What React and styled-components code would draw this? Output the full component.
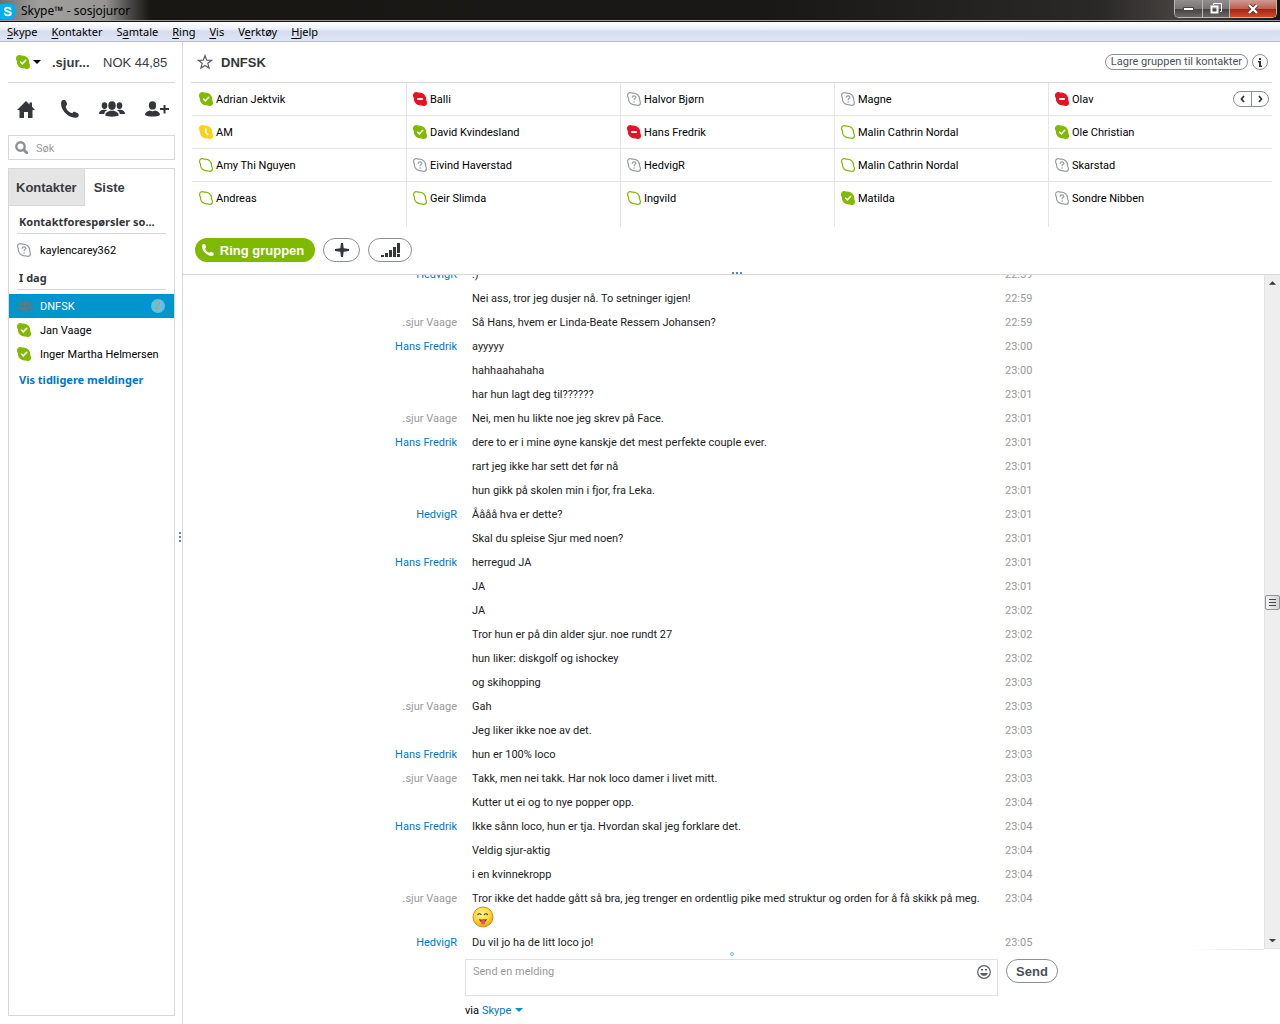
import React from 'react';
import styled, { css, createGlobalStyle } from 'styled-components';

const ui = `Roboto, 'Noto Sans', sans-serif`;
const noto = `'Noto Sans', 'Open Sans', sans-serif`;
const arial = `'Liberation Sans', Arial, sans-serif`;

const GlobalStyle = createGlobalStyle`
    * { box-sizing: border-box; }
    body {
        margin: 0;
        background: #fff;
        color: #000;
        font-family: ${ui};
        font-size: 11px;
    }
    button, input, textarea { font: inherit; color: inherit; margin: 0; }
    button { padding: 0; border: 0; background: none; cursor: pointer; }
    a { text-decoration: none; }
    ul { margin: 0; padding: 0; list-style: none; }
    svg { display: block; flex: none; }
`;

const Window = styled.div`
    display: flex;
    flex-direction: column;
    height: 100vh;
`;

/* title bar */
const TitleBar = styled.header`
    display: flex;
    align-items: flex-start;
    height: 22px;
    flex: none;
    overflow: hidden;
    background: linear-gradient(90deg, #6f6f6f 0, #a0a09f 40px, #969594 105px, #4a4846 130px, #191714 150px, #1a1816 60%, #2b2928 86%, #45423f 92%, #181513 100%);
    border-bottom: 1px solid #111;
    box-shadow: inset 0 -1px 0 #9a9a9a;
`;

const WindowTitle = styled.div`
    display: flex;
    align-items: center;
    gap: 5px;
    height: 21px;
    font-family: ${noto};
    font-size: 12px;
`;

const WindowButtons = styled.div`
    display: flex;
    height: 18px;
    margin: 0 3px 0 auto;
    border: 1px solid #b9b5b3;
    border-top: 0;
    border-radius: 0 0 5px 5px;
    overflow: hidden;
`;

const WindowButton = styled.button`
    display: flex;
    align-items: center;
    justify-content: center;
    width: ${props => props.$close ? '47px' : '27px'};
    background: linear-gradient(#918f8e 0, #777473 50%, #454140 52%, #6a6665 100%);
    ${props => props.$close && css`
        background: linear-gradient(#cf9b91 0, #bd6154 50%, #a4230f 52%, #cc4a2c 100%);
    `}
    & + & { border-left: 1px solid #b9b5b3; }
`;

/* menu bar */
const MenuBar = styled.nav`
    display: flex;
    align-items: center;
    gap: 14px;
    height: 20px;
    flex: none;
    padding-left: 7px;
    background: linear-gradient(#fff 0, #eef1f8 35%, #d5dcee 50%, #dfe5f5 100%);
    border-bottom: 1px solid #b5bccb;
`;

const MenuItem = styled.button`
    font-family: ${noto};
    line-height: 18px;
    u { text-underline-offset: 2px; }
`;

const Body = styled.div`
    display: flex;
    flex: 1;
    min-height: 0;
`;

/* left column */
const Sidebar = styled.aside`
    position: relative;
    display: flex;
    flex-direction: column;
    flex: 0 0 183px;
    min-width: 0;
    padding: 0 7px 8px 8px;
    border-right: 1px solid #d6d7d9;
`;

const Account = styled.div`
    display: flex;
    align-items: center;
    height: 41px;
    padding-left: 8px;
    border-bottom: 1px solid #d6d7d9;
    font-family: ${arial};
    font-size: 13px;
    color: #3a3b3f;
    white-space: nowrap;
`;

const StatusButton = styled.button`
    display: flex;
    align-items: center;
    gap: 3px;
    margin-right: 11px;
`;

const AccountName = styled.strong`
    width: 40px;
    margin-right: 11px;
`;

const Toolbar = styled.div`
    display: flex;
    align-items: center;
    justify-content: space-between;
    height: 52px;
    padding: 0 6px 0 9px;
    color: #35363b;
    button:first-child { width: 24px; }
`;

const Search = styled.label`
    display: flex;
    align-items: center;
    gap: 8px;
    height: 25px;
    padding-left: 6px;
    border: 1px solid #d6d7d9;
    input {
        flex: 1;
        min-width: 0;
        padding: 2px 0 0;
        border: 0;
        outline: 0;
    }
    input::placeholder { color: #999; }
`;

const Panel = styled.section`
    flex: 1;
    min-height: 0;
    margin-top: 8px;
    border: 1px solid #d6d7d9;
`;

const Tabs = styled.div`
    display: flex;
    height: 37px;
    font-family: ${arial};
    font-size: 13px;
    font-weight: bold;
`;

const Tab = styled.button`
    padding: 0 9px;
    color: #3a3b3f;
    ${props => props.$muted && css`
        padding: 0 7px;
        background: #e5e5e5;
        border-right: 1px solid #d6d7d9;
        border-bottom: 1px solid #d6d7d9;
    `}
`;

const ListHeading = styled.h2`
    height: 24px;
    margin: 4px 8px;
    padding-left: 2px;
    border-bottom: 1px solid #d6d7d9;
    font-family: ${noto};
    font-size: 11px;
    line-height: 24px;
    color: #35363b;
    white-space: nowrap;
`;

const Contact = styled.button`
    display: flex;
    align-items: center;
    gap: 8px;
    width: 100%;
    height: 24px;
    padding: 0 9px 0 8px;
    text-align: left;
    white-space: nowrap;
    ${props => props.$active && css`
        background: #0095cc;
        color: #fff;
    `}
`;

const IconSlot = styled.span`
    display: flex;
    width: 15px;
`;

const Unread = styled.span`
    width: 14px;
    height: 14px;
    margin-left: auto;
    border-radius: 7px;
    background: #66bfe0;
    color: #b0a878;
    line-height: 14px;
    text-align: center;
`;

const OlderLink = styled.a`
    display: block;
    padding-left: 10px;
    font-family: ${noto};
    font-weight: bold;
    line-height: 28px;
    color: #0078ca;
`;

const SideGrip = styled.span`
    position: absolute;
    top: 490px;
    right: 1px;
    width: 2px;
    height: 10px;
    background: repeating-linear-gradient(#5f83b3 0 2px, transparent 2px 4px);
`;

/* conversation */
const Main = styled.main`
    display: flex;
    flex-direction: column;
    flex: 1;
    min-width: 0;
`;

const GroupHeader = styled.section`
    position: relative;
    flex: none;
    padding: 0 8px;
    border-bottom: 1px solid #d6d7d9;
`;

const GroupTitle = styled.div`
    display: flex;
    align-items: center;
    height: 41px;
    padding: 0 4px 0 6px;
    border-bottom: 1px solid #d6d7d9;
    h1 {
        flex: 1;
        margin: 0 0 0 8px;
        font-family: ${arial};
        font-size: 13px;
        color: #35363b;
    }
`;

const SaveButton = styled.button`
    height: 16px;
    padding: 0 5px;
    margin-right: 4px;
    border: 1px solid #8b8f96;
    border-radius: 8px;
    line-height: 14px;
    color: #4d5058;
`;

const InfoButton = styled.button`
    display: flex;
    align-items: center;
    justify-content: center;
    width: 16px;
    height: 16px;
    border: 1px solid #8b8f96;
    border-radius: 8px;
`;

const Members = styled.ul`
    display: grid;
    grid-template-columns: 215fr 214fr 214fr 214fr 223fr;
    padding-left: 1px;
`;

const Member = styled.li`
    display: flex;
    align-items: flex-start;
    gap: 3px;
    height: ${props => props.$last ? '45px' : '33px'};
    padding: 9px 12px 0 6px;
    line-height: 16px;
    white-space: nowrap;
    border-right: 1px solid #e3e5ea;
    border-bottom: ${props => props.$last ? '0' : '1px solid #e3e5ea'};
    &:nth-child(5n) { border-right: 0; }
    &:nth-child(5n + 1) { padding-left: 7px; }
`;

const Pager = styled.span`
    display: flex;
    height: 16px;
    margin: -1px -9px 0 auto;
    border: 1px solid #8b8f96;
    border-radius: 8px;
    button {
        display: flex;
        align-items: center;
        justify-content: center;
        width: 17px;
    }
    button + button { border-left: 1px solid #8b8f96; }
`;

const Actions = styled.div`
    display: flex;
    gap: 8px;
    padding: 11px 4px 12px;
`;

const PillButton = styled.button`
    display: flex;
    align-items: center;
    justify-content: center;
    height: 24px;
    width: ${props => props.$width};
    border: 1px solid #8b8f96;
    border-radius: 12px;
    font-family: ${arial};
    font-size: 13px;
    font-weight: bold;
    color: #4d5058;
    ${props => props.$primary && css`
        gap: 6px;
        padding-right: 4px;
        border: 0;
        background: #7fba00;
        color: #fff;
    `}
`;

const HeaderGrip = styled.span`
    position: absolute;
    left: 50%;
    bottom: 0;
    width: 10px;
    height: 2px;
    background: repeating-linear-gradient(90deg, #5f83b3 0 2px, transparent 2px 4px);
`;

const Chat = styled.section`
    display: flex;
    flex: 1;
    min-height: 0;
    overflow: hidden;
`;

const Messages = styled.ul`
    flex: 1;
    min-width: 0;
    /* scrolled a little past the top of the first message */
    margin-top: -12px;
`;

const Message = styled.li`
    display: grid;
    grid-template-columns: 289fr 533fr 259fr;
    min-height: 24px;
    line-height: 24px;
`;

const Author = styled.span`
    padding-right: 15px;
    text-align: right;
    color: ${props => props.$self ? '#999' : '#0078ca'};
`;

const Text = styled.div`
    color: #222;
    svg { margin: -5px 0 3px; }
`;

const Time = styled.time`
    color: #999;
`;

const Scrollbar = styled.div`
    display: flex;
    flex-direction: column;
    align-items: center;
    flex: 0 0 16px;
    padding: 6px 0;
    background: #eee;
    border-left: 1px solid #e2e2e2;
    border-bottom: 1px solid #e2e2e2;
`;

const Thumb = styled.div`
    display: flex;
    align-items: center;
    justify-content: center;
    width: 15px;
    height: 15px;
    margin: 310px 0 auto;
    border: 1px solid #929292;
    border-radius: 2px;
    background: linear-gradient(90deg, #f6f6f6, #d2d2d5);
`;

const Composer = styled.form`
    position: relative;
    display: grid;
    grid-template-columns: 282fr 533fr 282fr;
    flex: none;
    padding: 10px 0 5px;
`;

const InputBox = styled.div`
    grid-column: 2;
    display: flex;
    align-items: flex-start;
    height: 37px;
    padding: 3px 6px 0 7px;
    border: 1px solid #dfe0e2;
    textarea {
        flex: 1;
        height: 28px;
        padding: 0;
        border: 0;
        outline: 0;
        resize: none;
        line-height: 18px;
    }
    textarea::placeholder { color: #999; }
    button { margin-top: 2px; }
`;

const SendSlot = styled.div`
    padding-left: 8px;
`;

const Via = styled.div`
    grid-column: 2;
    display: flex;
    align-items: center;
    gap: 3px;
    height: 18px;
    margin-top: 5px;
    a { display: flex; align-items: center; gap: 4px; color: #0078ca; }
`;

const ComposerGrip = styled.span`
    position: absolute;
    left: 50%;
    top: 3px;
    width: 4px;
    height: 4px;
    margin-left: -2px;
    border: 1px solid #7fb2cc;
    border-radius: 2px;
`;

const EdgeFade = styled.span`
    position: absolute;
    right: 16px;
    top: 0;
    width: 76px;
    height: 1px;
    background: linear-gradient(90deg, #fff, #e2e2e2);
`;

const STATUS_COLORS = { online: '#7fba00', busy: '#e81123', away: '#fcd116', offline: '#7fba00', unknown: '#999da3' };
const BUBBLE = 'M3.300.7C4.100.7 4.700 1 5.200 1.200C9.500.8 13 3.500 12.700 8.200C13.100 8.900 13.400 9.800 13.400 10.700C13.400 12.300 12.300 13.400 10.700 13.400C9.900 13.400 9.300 13.100 8.800 12.800C4.500 13.200 1 10.500 1.400 5.800C.9 5.100.6 4.200.6 3.400C.6 1.800 1.700.7 3.300.7z';

function Status({ type }) {
    const color = STATUS_COLORS[type];
    const hollow = type === 'offline' || type === 'unknown';
    return (
        <svg width="14" height="14" viewBox="0 0 14 14" fill="none" strokeLinecap="round">
            <path d={BUBBLE} fill={hollow ? '#fff' : color} stroke={color} strokeWidth="1.2" />
            {type === 'online' && <path d="M4.700 7.200l1.700 1.700 3.300-3.600" stroke="#fff" strokeWidth="1.600" />}
            {type === 'busy' && <path d="M4.200 7h5.600" stroke="#fff" strokeWidth="2" strokeLinecap="butt" />}
            {type === 'away' && <path d="M6.800 3.800v3.700l2 2" stroke="#fff" strokeWidth="1.700" />}
            {type === 'unknown' && (
                <>
                    <path d="M5.200 5.300c0-2 3.700-2 3.700 0 0 1.200-1.800 1.200-1.800 2.400" stroke={color} strokeWidth="1.200" />
                    <circle cx="7.100" cy="10" r=".8" fill={color} />
                </>
            )}
        </svg>
    );
}

const Caret = ({ color = '#000', size = 8 }) => (
    <svg width={size} height={size / 2} viewBox="0 0 8 4"><path d="M0 0h8L4 4z" fill={color} /></svg>
);

const Phone = ({ size }) => (
    <svg width={size} height={size} viewBox="0 0 18 18" fill="currentColor">
        <path d="M1.100.5c1.500-.8 3.300-.6 4 .7l.9 2.600c.3 1-.2 1.700-1.300 2.500.4 3.300 3.100 6.100 6.600 6.900.9-1.200 1.800-1.600 2.800-1.200l2.700 1.200c1.200.7 1.300 2.400.3 3.600-1.400 1.400-4 1.200-6.500.3C5.900 15.300 1.900 11.400.5 6.700-.1 4.300-.1 1.500 1.100.5z" />
    </svg>
);

const People = ({ width = 26, color = 'currentColor' }) => (
    <svg width={width} height={width * 16 / 26} viewBox="0 0 26 16" fill={color}>
        <ellipse cx="5.500" cy="4.600" rx="2.800" ry="3.400" />
        <ellipse cx="20.500" cy="4.600" rx="2.800" ry="3.400" />
        <path d="M0 13c0-2.500 1.500-3.500 4-4.200h3.200l.8.500c-1.800 1-2.700 2-2.700 3.700H0zM26 13c0-2.500-1.500-3.500-4-4.200h-3.200l-.8.500c1.800 1 2.700 2 2.700 3.700H26z" />
        <ellipse cx="13" cy="4.600" rx="3.700" ry="4.300" />
        <path d="M6.300 14.500c0-3 2.200-3.500 4.700-4.700h4c2.500 1.200 4.700 1.700 4.700 4.700-3 1.500-10.400 1.500-13.400 0z" />
    </svg>
);

const Tongue = () => (
    <svg width="22" height="22" viewBox="0 0 22 22" fill="none">
        <defs>
            <radialGradient id="face" cx=".45" cy=".35" r=".65">
                <stop offset="0" stopColor="#fff5a0" />
                <stop offset=".65" stopColor="#ffd42e" />
                <stop offset="1" stopColor="#ee9b10" />
            </radialGradient>
        </defs>
        <circle cx="11" cy="11" r="10" fill="url(#face)" stroke="#d98c1c" />
        <path d="M5.500 9c1-1.600 2.800-1.600 3.800 0M12 9c1-1.600 2.800-1.600 3.800 0" stroke="#52350c" strokeWidth="1.100" />
        <path d="M7 13c2.500.8 5.500.8 8 0-.5 2.200-1.800 3.500-4 3.500s-3.500-1.300-4-3.500z" fill="#7a3418" />
        <path d="M9 14.500c1.500-.6 2.700-.6 4 0v2c0 2.700-4 2.700-4 0z" fill="#e8505a" />
    </svg>
);

const MENU = [['', 'S', 'kype'], ['', 'K', 'ontakter'], ['S', 'a', 'mtale'], ['', 'R', 'ing'], ['', 'V', 'is'], ['V', 'e', 'rktøy'], ['', 'H', 'jelp']];

const MEMBERS = [
    ['Adrian Jektvik', 'online'], ['Balli', 'busy'], ['Halvor Bjørn', 'unknown'], ['Magne', 'unknown'], ['Olav', 'busy'],
    ['AM', 'away'], ['David Kvindesland', 'online'], ['Hans Fredrik', 'busy'], ['Malin Cathrin Nordal', 'offline'], ['Ole Christian', 'online'],
    ['Amy Thi Nguyen', 'offline'], ['Eivind Haverstad', 'unknown'], ['HedvigR', 'unknown'], ['Malin Cathrin Nordal', 'offline'], ['Skarstad', 'unknown'],
    ['Andreas', 'offline'], ['Geir Slimda', 'offline'], ['Ingvild', 'offline'], ['Matilda', 'online'], ['Sondre Nibben', 'unknown'],
];

const ME = '.sjur Vaage';
const MESSAGES = [
    ['HedvigR', ':)', '22:59'],
    ['', 'Nei ass, tror jeg dusjer nå. To setninger igjen!', '22:59'],
    [ME, 'Så Hans, hvem er Linda-Beate Ressem Johansen?', '22:59'],
    ['Hans Fredrik', 'ayyyyy', '23:00'],
    ['', 'hahhaahahaha', '23:00'],
    ['', 'har hun lagt deg til??????', '23:01'],
    [ME, 'Nei, men hu likte noe jeg skrev på Face.', '23:01'],
    ['Hans Fredrik', 'dere to er i mine øyne kanskje det mest perfekte couple ever.', '23:01'],
    ['', 'rart jeg ikke har sett det før nå', '23:01'],
    ['', 'hun gikk på skolen min i fjor, fra Leka.', '23:01'],
    ['HedvigR', 'Åååå hva er dette?', '23:01'],
    ['', 'Skal du spleise Sjur med noen?', '23:01'],
    ['Hans Fredrik', 'herregud JA', '23:01'],
    ['', 'JA', '23:01'],
    ['', 'JA', '23:02'],
    ['', 'Tror hun er på din alder sjur. noe rundt 27', '23:02'],
    ['', 'hun liker: diskgolf og ishockey', '23:02'],
    ['', 'og skihopping', '23:03'],
    [ME, 'Gah', '23:03'],
    ['', 'Jeg liker ikke noe av det.', '23:03'],
    ['Hans Fredrik', 'hun er 100% loco', '23:03'],
    [ME, 'Takk, men nei takk. Har nok loco damer i livet mitt.', '23:03'],
    ['', 'Kutter ut ei og to nye popper opp.', '23:04'],
    ['Hans Fredrik', 'Ikke sånn loco, hun er tja. Hvordan skal jeg forklare det.', '23:04'],
    ['', 'Veldig sjur-aktig', '23:04'],
    ['', 'i en kvinnekropp', '23:04'],
    [ME, 'Tror ikke det hadde gått så bra, jeg trenger en ordentlig pike med struktur og orden for å få skikk på meg.', '23:04', true],
    ['HedvigR', 'Du vil jo ha de litt loco jo!', '23:05'],
];

const ContactList = () => (
    <Sidebar>
        <Account>
            <StatusButton aria-label="Status"><Status type="online" /><Caret /></StatusButton>
            <AccountName>.sjur...</AccountName>
            <span>NOK 44,85</span>
        </Account>
        <Toolbar>
            <button aria-label="Hjem">
                <svg width="18" height="17" viewBox="0 0 18 17" fill="currentColor">
                    <path d="M9 0l3.500 3.400V1.500h2.500v4.300L18 9h-2.500v8H11v-6H7v6H2.500V9H0z" />
                </svg>
            </button>
            <button aria-label="Ring"><Phone size={18} /></button>
            <button aria-label="Gruppe"><People /></button>
            <button aria-label="Legg til kontakt">
                <svg width="24" height="16" viewBox="0 0 24 16" fill="currentColor">
                    <ellipse cx="7.500" cy="4.400" rx="3.600" ry="4.200" />
                    <path d="M0 14c0-2.500 1.500-3.500 5-4.500 1.500 1 3.500 1 5 0 3.500 1 5 2 5 4.500-3 2-12 2-15 0zM18.500 4h2v3H24v2h-3.500v3.500h-2V9H15V7h3.500z" />
                </svg>
            </button>
        </Toolbar>
        <Search>
            <svg width="13" height="13" viewBox="0 0 13 13" fill="none" stroke="#8c9198">
                <circle cx="5.500" cy="5.500" r="4.200" strokeWidth="2.400" />
                <path d="M8.800 8.800L12 12" strokeWidth="3" strokeLinecap="round" />
            </svg>
            <input type="text" placeholder="Søk" aria-label="Søk" />
        </Search>
        <Panel>
            <Tabs>
                <Tab $muted>Kontakter</Tab>
                <Tab>Siste</Tab>
            </Tabs>
            <ListHeading>Kontaktforespørsler so...</ListHeading>
            <Contact><IconSlot><Status type="unknown" /></IconSlot>kaylencarey362</Contact>
            <ListHeading>I dag</ListHeading>
            <Contact $active>
                <IconSlot><People width={16} color="#78716f" /></IconSlot>DNFSK<Unread>2</Unread>
            </Contact>
            <Contact><IconSlot><Status type="online" /></IconSlot>Jan Vaage</Contact>
            <Contact><IconSlot><Status type="online" /></IconSlot>Inger Martha Helmersen</Contact>
            <OlderLink href="#older">Vis tidligere meldinger</OlderLink>
        </Panel>
        <SideGrip />
    </Sidebar>
);

const Group = () => (
    <GroupHeader>
        <GroupTitle>
            <svg width="16" height="16" viewBox="0 0 16 16" fill="none" stroke="#5b5e65" strokeWidth="1.200">
                <path d="M8 1.500l1.700 4.600 4.900.2-3.800 3 1.300 4.800L8 11.400l-4.100 2.700 1.300-4.800-3.800-3 4.900-.2z" />
            </svg>
            <h1>DNFSK</h1>
            <SaveButton>Lagre gruppen til kontakter</SaveButton>
            <InfoButton aria-label="Info">
                <svg width="6" height="9" viewBox="0 0 6 9" fill="#35363b"><path d="M2 0h2v2H2zM1 3h3v4.500h1V9H2V4.500H1z" /></svg>
            </InfoButton>
        </GroupTitle>
        <Members>
            {MEMBERS.map(([name, status], i) => (
                <Member key={i} $last={i >= 15}>
                    <Status type={status} />{name}
                    {i === 4 && (
                        <Pager>
                            <button aria-label="Forrige"><svg width="5" height="8" viewBox="0 0 5 8" fill="none" stroke="#35363b" strokeWidth="1.800"><path d="M4 1L1.500 4 4 7" /></svg></button>
                            <button aria-label="Neste"><svg width="5" height="8" viewBox="0 0 5 8" fill="none" stroke="#35363b" strokeWidth="1.800"><path d="M1 1l2.500 3L1 7" /></svg></button>
                        </Pager>
                    )}
                </Member>
            ))}
        </Members>
        <Actions>
            <PillButton $primary $width="120px"><Phone size={12} />Ring gruppen</PillButton>
            <PillButton $width="37px" aria-label="Legg til">
                <svg width="14" height="14" viewBox="0 0 14 14" fill="#35363b">
                    <path d="M6 0h2l.7 5.300L14 6v2l-5.300.7L8 14H6l-.7-5.300L0 8V6l5.300-.7z" />
                </svg>
            </PillButton>
            <PillButton $width="44px" aria-label="Samtalekvalitet">
                <svg width="19" height="14" viewBox="0 0 19 14" fill="#35363b">
                    <path d="M0 12h3v2H0zM4 10h3v4H4zM8 7h3v7H8zM12 4h3v10h-3zM16 0h3v10h-3zM16 11h3v3h-3z" />
                </svg>
            </PillButton>
        </Actions>
        <HeaderGrip />
    </GroupHeader>
);

const App = () => (
    <Window>
        <GlobalStyle />
        <TitleBar>
            <WindowTitle>
                <svg width="16" height="18" viewBox="0 0 16 18">
                    <path d="M0 2h11c3 0 5 2 4.500 5 1 4-.5 10-4.500 10H0z" fill="#00aff0" />
                    <path d="M10.500 7.200C9.800 5 5 5.200 5 7.500c0 2.600 5.800 1.400 5.800 4 0 2.400-5.300 2.500-6.100.2" fill="none" stroke="#fff" strokeWidth="1.900" strokeLinecap="round" />
                </svg>
                Skype™ - sosjojuror
            </WindowTitle>
            <WindowButtons>
                <WindowButton aria-label="Minimer"><svg width="11" height="4" viewBox="0 0 11 4"><path d="M.5.5h10v3H.5z" fill="#fff" stroke="#444" /></svg></WindowButton>
                <WindowButton aria-label="Gjenopprett">
                    <svg width="12" height="12" viewBox="0 0 12 12" fill="none" stroke="#fff"><path d="M3.500 2V.5h8v8H10" /><path d="M1.500 3.500h6v6h-6z" strokeWidth="2" /></svg>
                </WindowButton>
                <WindowButton $close aria-label="Lukk">
                    <svg width="12" height="10" viewBox="0 0 12 10" fill="none"><path d="M2 1l8 8M10 1L2 9" stroke="#6b2a22" strokeWidth="4" /><path d="M2 1l8 8M10 1L2 9" stroke="#fff" strokeWidth="2.400" /></svg>
                </WindowButton>
            </WindowButtons>
        </TitleBar>
        <MenuBar>
            {MENU.map(([before, key, after]) => (
                <MenuItem key={after}>{before}<u>{key}</u>{after}</MenuItem>
            ))}
        </MenuBar>
        <Body>
            <ContactList />
            <Main>
                <Group />
                <Chat>
                    <Messages>
                        {MESSAGES.map(([author, text, time, smiley], i) => (
                            <Message key={i}>
                                <Author $self={author === ME}>{author}</Author>
                                <Text>{text}{smiley && <Tongue />}</Text>
                                <Time>{time}</Time>
                            </Message>
                        ))}
                    </Messages>
                    <Scrollbar>
                        <svg width="7" height="4" viewBox="0 0 8 4"><path d="M4 0l4 4H0z" fill="#333" /></svg>
                        <Thumb>
                            <svg width="7" height="8" viewBox="0 0 7 8"><path d="M0 .5h7M0 3.500h7M0 6.500h7" stroke="#444" /></svg>
                        </Thumb>
                        <Caret color="#444" size={7} />
                    </Scrollbar>
                </Chat>
                <Composer onSubmit={e => e.preventDefault()}>
                    <EdgeFade />
                    <ComposerGrip />
                    <InputBox>
                        <textarea placeholder="Send en melding" aria-label="Send en melding" />
                        <button type="button" aria-label="Smilefjes">
                            <svg width="14" height="14" viewBox="0 0 14 14" fill="none" stroke="#5b5e65">
                                <circle cx="7" cy="7" r="6.300" strokeWidth="1.200" />
                                <path d="M4 4h2v1.500H4zM8 4h2v1.500H8zM3.200 8h7.600c-.6 3.800-7 3.800-7.600 0z" fill="#5b5e65" stroke="none" />
                            </svg>
                        </button>
                    </InputBox>
                    <SendSlot><PillButton $width="52px">Send</PillButton></SendSlot>
                    <Via>via <a href="#via">Skype <Caret color="#0095cc" /></a></Via>
                </Composer>
            </Main>
        </Body>
    </Window>
);

export default App;
